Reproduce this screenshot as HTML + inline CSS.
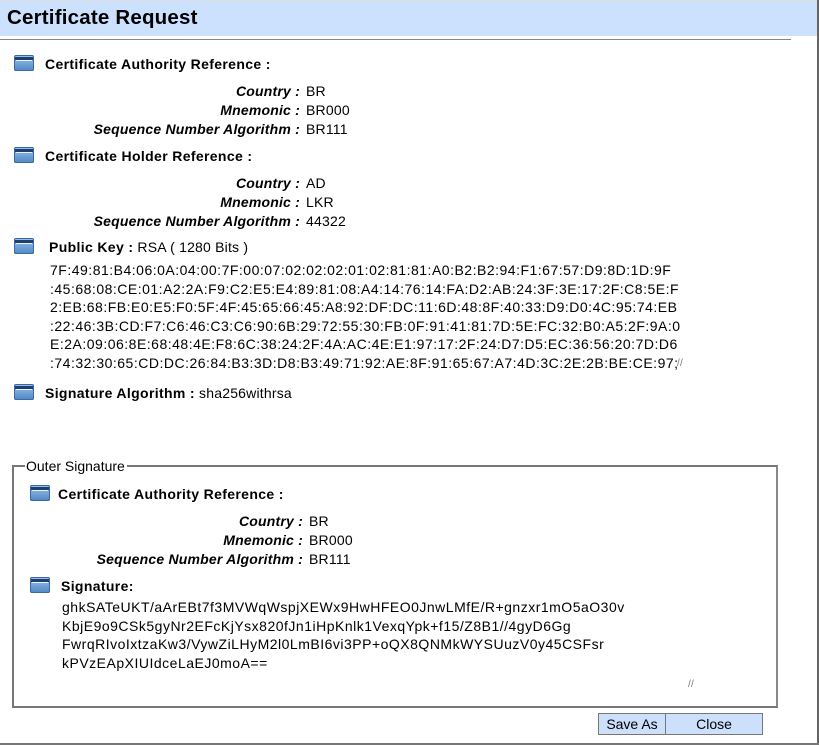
<!DOCTYPE html>
<html><head><meta charset="utf-8"><style>
body{margin:0;width:819px;height:745px;position:relative;background:#fff;font-family:"Liberation Sans",Tahoma,sans-serif;font-size:14px;color:#000;overflow:hidden}
.a{position:absolute;white-space:nowrap;line-height:16px;letter-spacing:0.2px}
.b{font-weight:bold;letter-spacing:0.35px}
.i{font-style:italic;font-weight:bold;text-align:right;letter-spacing:0.2px}
.ic{position:absolute;width:20px;height:16px;border-radius:2px;background:linear-gradient(#9cc4ec,#4f86c4);box-shadow:inset 0 0 0 1px #3b6aa0}
.ic:before{content:"";position:absolute;left:1px;right:1px;top:2px;height:3px;background:#1f3f6e}
.ic:after{content:"";position:absolute;left:2px;right:2px;top:5px;height:1px;background:#e8f2ff}
.btn{position:absolute;top:713px;height:20px;background:#cce0fc;border:1px solid #777;line-height:20px;text-align:center;font-size:14px}
</style></head><body>
<div style="position:absolute;left:0;top:0;width:819px;height:1px;background:#ddd"></div>
<div style="position:absolute;left:0;top:1px;width:818px;height:35px;background:#cce1fd"></div>
<div class="a b" style="left:7px;top:7px;font-size:20.5px;line-height:22px;letter-spacing:0.2px">Certificate Request</div>
<div style="position:absolute;left:0;top:39px;width:791px;height:1px;background:#888"></div>
<div style="position:absolute;left:817px;top:0;width:2px;height:745px;background:#666"></div>
<div style="position:absolute;left:0;top:743px;width:819px;height:2px;background:#777"></div>

<div class="ic" style="left:14px;top:55px"></div>
<div class="a b" style="left:45px;top:56px">Certificate Authority Reference :</div>
<div class="a i" style="right:519px;top:83px">Country :</div><div class="a" style="left:306px;top:83px">BR</div>
<div class="a i" style="right:519px;top:102px">Mnemonic :</div><div class="a" style="left:306px;top:102px">BR000</div>
<div class="a i" style="right:519px;top:121px">Sequence Number Algorithm :</div><div class="a" style="left:306px;top:121px">BR111</div>

<div class="ic" style="left:14px;top:147px"></div>
<div class="a b" style="left:45px;top:148px">Certificate Holder Reference :</div>
<div class="a i" style="right:519px;top:175px">Country :</div><div class="a" style="left:306px;top:175px">AD</div>
<div class="a i" style="right:519px;top:194px">Mnemonic :</div><div class="a" style="left:306px;top:194px">LKR</div>
<div class="a i" style="right:519px;top:213px">Sequence Number Algorithm :</div><div class="a" style="left:306px;top:213px">44322</div>

<div class="ic" style="left:14px;top:238px"></div>
<div class="a" style="left:49px;top:239px"><b style="letter-spacing:0.35px">Public Key :</b> RSA ( 1280 Bits )</div>
<div class="a" style="left:50px;top:261px;line-height:18.6px;letter-spacing:0.5px">7F:49:81:B4:06:0A:04:00:7F:00:07:02:02:02:01:02:81:81:A0:B2:B2:94:F1:67:57:D9:8D:1D:9F<br>:45:68:08:CE:01:A2:2A:F9:C2:E5:E4:89:81:08:A4:14:76:14:FA:D2:AB:24:3F:3E:17:2F:C8:5E:F<br>2:EB:68:FB:E0:E5:F0:5F:4F:45:65:66:45:A8:92:DF:DC:11:6D:48:8F:40:33:D9:D0:4C:95:74:EB<br>:22:46:3B:CD:F7:C6:46:C3:C6:90:6B:29:72:55:30:FB:0F:91:41:81:7D:5E:FC:32:B0:A5:2F:9A:0<br>E:2A:09:06:8E:68:48:4E:F8:6C:38:24:2F:4A:AC:4E:E1:97:17:2F:24:D7:D5:EC:36:56:20:7D:D6<br>:74:32:30:65:CD:DC:26:84:B3:3D:D8:B3:49:71:92:AE:8F:91:65:67:A7:4D:3C:2E:2B:BE:CE:97;</div>
<div class="a" style="left:677px;top:356px;font-size:10px;color:#777">//</div>

<div class="ic" style="left:14px;top:384px"></div>
<div class="a" style="left:45px;top:385px"><b style="letter-spacing:0.35px">Signature Algorithm :</b> sha256withrsa</div>

<div style="position:absolute;left:12px;top:465px;width:762px;height:239px;border:2px solid #777;border-right-color:#888"></div>
<div class="a" style="left:25px;top:458px;background:#fff;padding:0 2px 0 1px;letter-spacing:0">Outer Signature</div>

<div class="ic" style="left:30px;top:485px"></div>
<div class="a b" style="left:58px;top:486px">Certificate Authority Reference :</div>
<div class="a i" style="right:516px;top:513px">Country :</div><div class="a" style="left:309px;top:513px">BR</div>
<div class="a i" style="right:516px;top:532px">Mnemonic :</div><div class="a" style="left:309px;top:532px">BR000</div>
<div class="a i" style="right:516px;top:551px">Sequence Number Algorithm :</div><div class="a" style="left:309px;top:551px">BR111</div>

<div class="ic" style="left:30px;top:577px"></div>
<div class="a b" style="left:61px;top:578px">Signature:</div>
<div class="a" style="left:62px;top:598px;line-height:18.7px;letter-spacing:0.5px">ghkSATeUKT/aArEBt7f3MVWqWspjXEWx9HwHFEO0JnwLMfE/R+gnzxr1mO5aO30v<br>KbjE9o9CSk5gyNr2EFcKjYsx820fJn1iHpKnlk1VexqYpk+f15/Z8B1//4gyD6Gg<br>FwrqRIvoIxtzaKw3/VywZiLHyM2l0LmBI6vi3PP+oQX8QNMkWYSUuzV0y45CSFsr<br>kPVzEApXIUIdceLaEJ0moA==</div>
<div class="a" style="left:688px;top:677px;font-size:10px;color:#777">//</div>

<div class="btn" style="left:598px;width:66px">Save As</div>
<div class="btn" style="left:665px;width:96px">Close</div>
</body></html>
